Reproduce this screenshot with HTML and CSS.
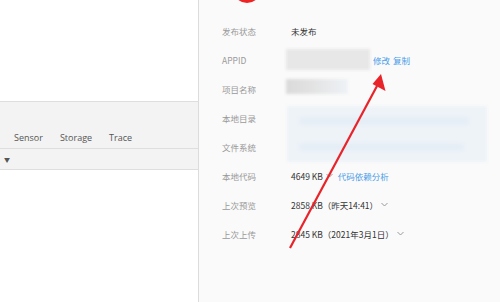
FILE: index.html
```html
<!DOCTYPE html>
<html lang="zh-CN">
<head>
    <meta charset="UTF-8">
    <title>项目详情</title>
    <link rel="stylesheet" href="styles.css">
</head>
<body>
    <div class="window">
        <!-- Left: simulator / debugger -->
        <div class="debugger">
            <div class="preview"></div>
            <div class="tabs">
                <span class="tab">Sensor</span>
                <span class="tab">Storage</span>
                <span class="tab">Trace</span>
            </div>
            <div class="filter-row"><span class="caret">▼</span></div>
        </div>

        <!-- Right: project details -->
        <div class="details">
            <div class="avatar"></div>

            <div class="row">
                <span class="label">发布状态</span>
                <span class="value">未发布</span>
            </div>
            <div class="row">
                <span class="label">APPID</span>
                <span class="value">
                    <span class="mosaic mosaic-id"></span>
                    <a class="link">修改</a>
                    <a class="link">复制</a>
                </span>
            </div>
            <div class="row">
                <span class="label">项目名称</span>
                <span class="value"><span class="mosaic mosaic-name"></span></span>
            </div>
            <div class="row">
                <span class="label">本地目录</span>
                <span class="value"></span>
            </div>
            <div class="row">
                <span class="label">文件系统</span>
                <span class="value"></span>
            </div>
            <div class="row">
                <span class="label">本地代码</span>
                <span class="value"><span>4649 KB</span><svg class="chevron" width="7" height="5" viewBox="0 0 7 5"><path d="M0.5 1l3 3 3-3" fill="none" stroke="#999" stroke-width="1"/></svg><a class="link">代码依赖分析</a></span>
            </div>
            <div class="row">
                <span class="label">上次预览</span>
                <span class="value"><span>2858 KB（昨天14:41）</span><svg class="chevron" width="7" height="5" viewBox="0 0 7 5"><path d="M0.5 1l3 3 3-3" fill="none" stroke="#999" stroke-width="1"/></svg></span>
            </div>
            <div class="row">
                <span class="label">上次上传</span>
                <span class="value"><span>2845 KB（2021年3月1日）</span><svg class="chevron" width="7" height="5" viewBox="0 0 7 5"><path d="M0.5 1l3 3 3-3" fill="none" stroke="#999" stroke-width="1"/></svg></span>
            </div>

            <!-- blurred path block over 本地目录 / 文件系统 -->
            <div class="mosaic-dir">
                <span class="stripe stripe-a"></span>
                <span class="stripe stripe-b"></span>
            </div>
        </div>

        <!-- annotation arrow -->
        <svg class="arrow" width="500" height="302" viewBox="0 0 500 302">
            <line x1="290" y1="248" x2="377" y2="86" stroke="#e8232a" stroke-width="2.2"/>
            <polygon points="381,74 385.5,91 372.5,84" fill="#e8232a"/>
        </svg>
    </div>
</body>
</html>
```

FILE: styles.css
```css
* {
    margin: 0;
    padding: 0;
    box-sizing: border-box;
}

body {
    font-family: "Noto Sans CJK SC", "Noto Sans", sans-serif;
    background: white;
    color: #333;
    width: 500px;
    height: 302px;
    overflow: hidden;
}

.window {
    display: flex;
    height: 302px;
    position: relative;
}

/* Left debugger panel */
.debugger {
    width: 199px;
    border-right: 1px solid #dcdcdc;
    background: white;
}

.preview {
    height: 102px;
    border-bottom: 1px solid #dedede;
}

.tabs {
    height: 47px;
    background: #f3f3f3;
    border-bottom: 1px solid #dedede;
    display: flex;
    align-items: flex-end;
    padding: 0 0 3px 14px;
    gap: 17px;
}

.tab {
    font-family: "Open Sans", sans-serif;
    font-size: 9px;
    color: #555;
    line-height: 14px;
}

.filter-row {
    height: 21px;
    background: #f3f3f3;
    border-bottom: 1px solid #dedede;
    padding-left: 4px;
    display: flex;
    align-items: center;
}

.caret {
    font-size: 6px;
    color: #555;
}

/* Right details panel */
.details {
    flex: 1;
    background: #fafafa;
    padding-top: 16px;
    position: relative;
    overflow: hidden;
}

.avatar {
    position: absolute;
    left: 34px;
    top: -25px;
    width: 28px;
    height: 28px;
    border-radius: 50%;
    background: #ee2424;
}

.row {
    display: flex;
    align-items: center;
    height: 29px;
    font-size: 8.5px;
}

.label {
    width: 92px;
    padding-left: 23px;
    color: #999;
}

.value {
    display: flex;
    align-items: center;
    color: #333;
    white-space: nowrap;
}

.link {
    color: #4a9de8;
    margin-left: 3px;
}

.chevron {
    margin: 0 2px 0 3px;
}

.mosaic {
    display: block;
    filter: blur(1.5px);
}

.mosaic-id {
    width: 84px;
    height: 21px;
    margin-left: -5px;
    background: #e7e7e7;
}

.mosaic-name {
    width: 62px;
    height: 15px;
    margin-left: -5px;
    margin-top: -5px;
    background: linear-gradient(90deg, #dadada 0%, #e2e2e2 40%, #eef2f6 100%);
}

.mosaic-dir {
    position: absolute;
    left: 88px;
    top: 106px;
    width: 200px;
    height: 56px;
    background: #eef3f8;
    filter: blur(1.5px);
}

.stripe {
    position: absolute;
    left: 12px;
    height: 6px;
    border-radius: 3px;
    background: #e2ebf5;
    filter: blur(2px);
}

.stripe-a {
    top: 12px;
    width: 170px;
}

.stripe-b {
    top: 38px;
    width: 165px;
}

/* annotation */
.arrow {
    position: absolute;
    left: 0;
    top: 0;
    pointer-events: none;
}
```
